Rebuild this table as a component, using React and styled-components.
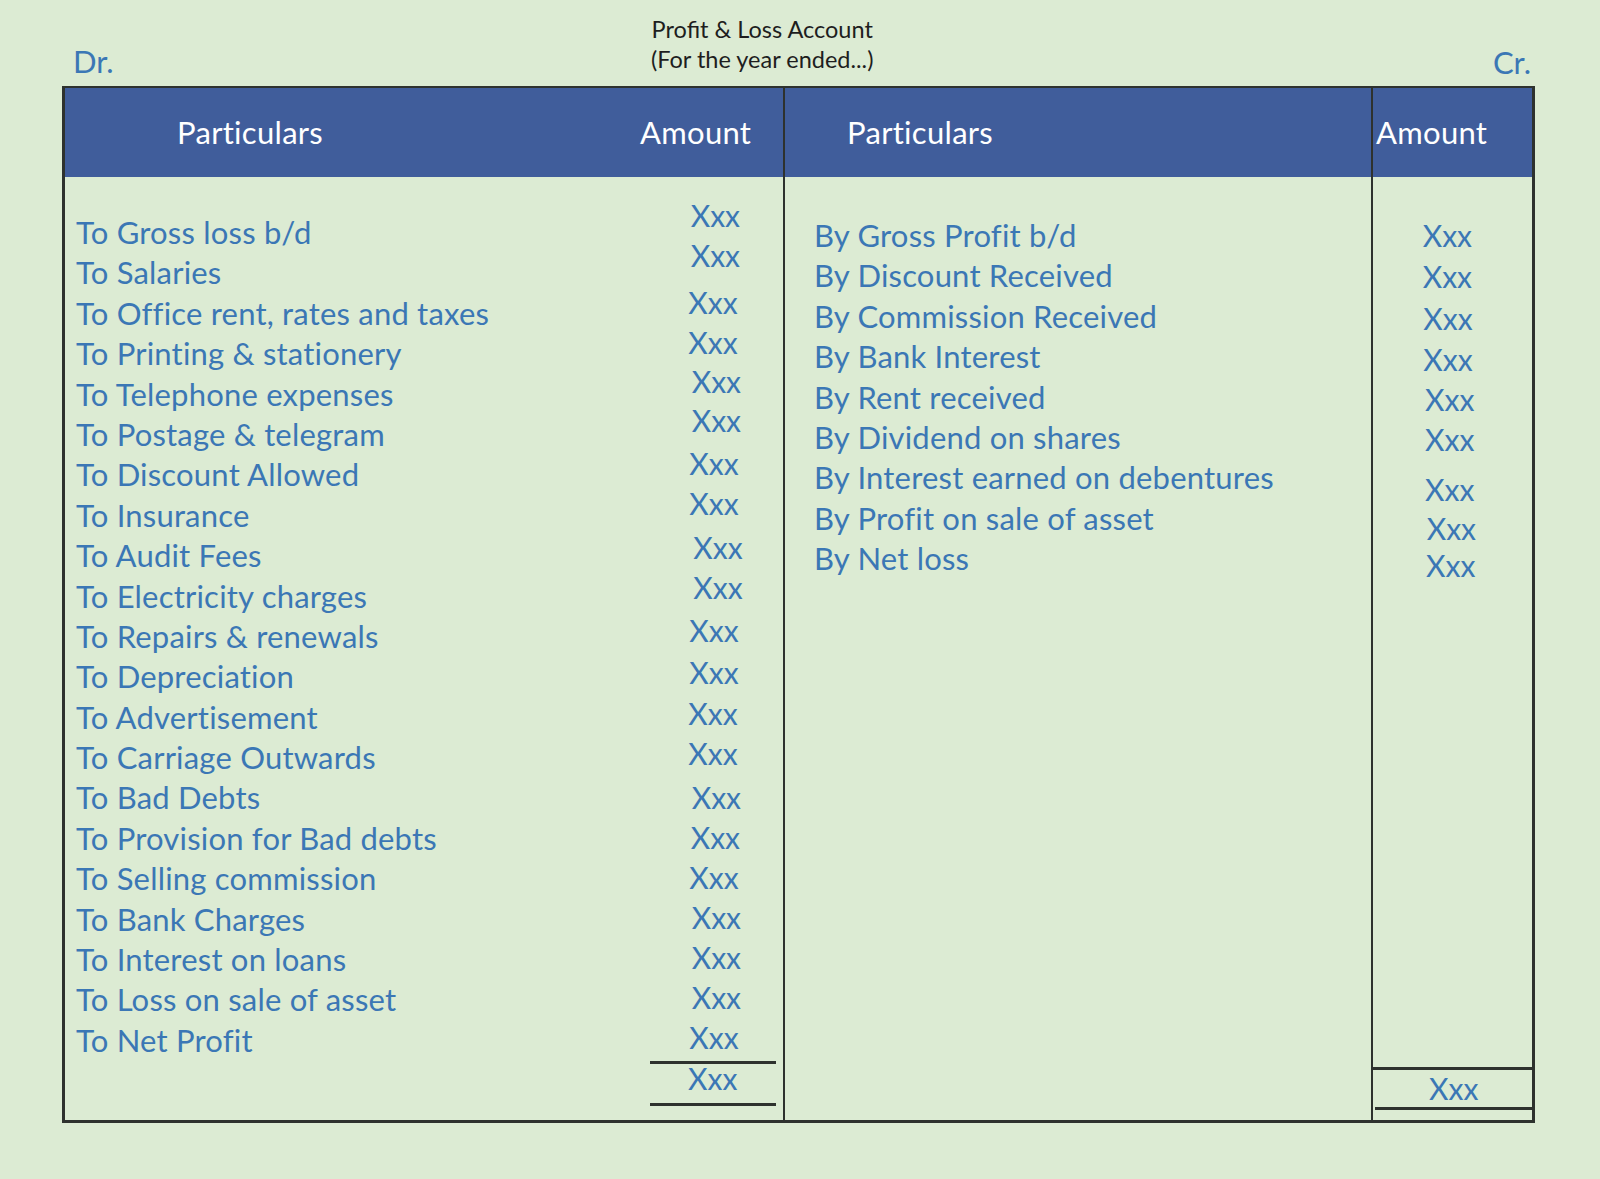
import React from "react";
import styled, { createGlobalStyle } from "styled-components";

const BLUE_TEXT = "#3b77b5";
const HEAD_BLUE = "#405d9b";
const LINE = "#2e322e";
const BG = "#dcebd3";

const GlobalStyle = createGlobalStyle`
  html, body { margin: 0; padding: 0; background: ${BG}; }
  body { font-family: Lato, "Open Sans", "Liberation Sans", sans-serif; }
  * { box-sizing: border-box; }
`;

const Page = styled.div`
  width: 1600px;
  height: 1179px;
  padding-left: 62px;
  background: ${BG};
  overflow: hidden;
`;

const TopBar = styled.header`
  width: 1473px;
  height: 86px;
  display: grid;
  grid-template-columns: 589px auto 1fr;
  align-items: start;
`;

const SideMark = styled.div`
  font-size: 31px;
  line-height: 40px;
  color: ${BLUE_TEXT};
  padding-top: ${(p) => p.$top}px;
  padding-left: ${(p) => p.$left || 0}px;
  padding-right: ${(p) => p.$right || 0}px;
  justify-self: ${(p) => p.$justify || "start"};
`;

const Title = styled.div`
  padding-top: 14px;
  text-align: center;
  color: #1e1e1e;
  font-size: 23.5px;
  line-height: 30px;
`;

const Table = styled.div`
  width: 1473px;
  height: 1037px;
  display: flex;
  border-top: 2px solid ${LINE};
  border-left: 3px solid ${LINE};
  border-right: 3px solid ${LINE};
  border-bottom: 3px solid ${LINE};
`;

const Side = styled.section`
  width: ${(p) => p.$width}px;
  flex: ${(p) => (p.$width ? "none" : "1")};
  display: flex;
  flex-direction: column;
  border-right: ${(p) => (p.$divider ? `2px solid ${LINE}` : "none")};
`;

const HeadBand = styled.div`
  height: 89px;
  flex: none;
  background: ${HEAD_BLUE};
  display: grid;
  grid-template-columns: ${(p) => p.$cols};
  align-items: center;
  color: #ffffff;
  font-size: 31px;
  letter-spacing: 0.3px;
`;

const HeadLabel = styled.div`
  padding-left: ${(p) => p.$pad}px;
  line-height: 40px;
  padding-bottom: 2px;
`;

const Body = styled.div`
  flex: 1;
  display: grid;
  grid-template-columns: ${(p) => p.$cols};
  min-height: 0;
`;

const LabelList = styled.ul`
  list-style: none;
  margin: 0;
  padding: ${(p) => p.$top}px 0 0 ${(p) => p.$left}px;
`;

const LabelRow = styled.li`
  font-size: 31px;
  letter-spacing: 0.2px;
  line-height: 40.4px;
  height: 40.4px;
  color: ${BLUE_TEXT};
  white-space: nowrap;
`;

const AmountColumn = styled.div`
  display: flex;
  flex-direction: column;
  flex: ${(p) => (p.$fill ? "1" : "none")};
`;

const AmountList = styled.ul`
  list-style: none;
  margin: 0;
  padding: 0;
  display: flex;
  flex-direction: column;
`;

const AmountItem = styled.li`
  font-size: 30px;
  line-height: 40px;
  height: 40px;
  color: ${BLUE_TEXT};
  margin-top: ${(p) => p.$offset}px;
  padding-left: ${(p) => p.$indent}px;
  white-space: nowrap;
`;

const DebitTotal = styled.div`
  margin: 4px 0 0 10px;
  width: 126px;
  border-top: 3px solid ${LINE};
  border-bottom: 3px solid ${LINE};
  font-size: 30px;
  line-height: 29px;
  padding: 0 0 10.5px 38px;
  color: ${BLUE_TEXT};
`;

const Spacer = styled.div`
  flex: 1;
`;

const CreditTotal = styled.div`
  border-top: 3px solid ${LINE};
  margin-bottom: 10px;
`;

const TotalValue = styled.div`
  font-size: 30px;
  line-height: 37px;
  height: 37px;
  padding-left: 56px;
  color: ${BLUE_TEXT};
`;

const BottomRule = styled.div`
  height: 3px;
  margin-left: 2px;
  background: ${LINE};
`;

const debitRows = [
  "To Gross loss b/d",
  "To Salaries",
  "To Office rent, rates and taxes",
  "To Printing & stationery",
  "To Telephone expenses",
  "To Postage & telegram",
  "To Discount Allowed",
  "To Insurance",
  "To Audit Fees",
  "To Electricity charges",
  "To Repairs & renewals",
  "To Depreciation",
  "To Advertisement",
  "To Carriage Outwards",
  "To Bad Debts",
  "To Provision for Bad debts",
  "To Selling commission",
  "To Bank Charges",
  "To Interest on loans",
  "To Loss on sale of asset",
  "To Net Profit",
];

// [cap centre y on the page, x start of the figure on the page]
const debitAmounts = [
  [215.8, 690.7], [255.8, 690.7], [302.5, 688.3], [342.5, 688.3],
  [381.8, 691.7], [420.8, 691.7], [464, 689.3], [504, 689.3],
  [547.5, 693.3], [587.5, 693.3], [630.8, 689.3], [672.5, 689.3],
  [714.2, 688.3], [754.2, 688.3], [797.5, 691.7], [837.5, 690.7],
  [877.5, 689.3], [917.5, 691.7], [957.5, 691.7], [997.5, 691.7],
  [1037.5, 689.3],
];

const creditRows = [
  "By Gross Profit b/d",
  "By Discount Received",
  "By Commission Received",
  "By Bank Interest",
  "By Rent received",
  "By Dividend on shares",
  "By Interest earned on debentures",
  "By Profit on sale of asset",
  "By Net loss",
];

const creditAmounts = [
  [235.8, 1422.7], [276.8, 1422.7], [319.2, 1423.3], [359.8, 1423.3],
  [400.2, 1425], [440.2, 1425], [490.2, 1425], [529.2, 1426.7],
  [565.8, 1426],
];

const BODY_TOP = 177;
const CAP_CENTRE = 20.8;

function Amounts({ items, columnLeft }) {
  let bottom = BODY_TOP;
  return (
    <AmountList>
      {items.map(([cy, x], i) => {
        const top = cy - CAP_CENTRE;
        const offset = top - bottom;
        bottom = top + 40;
        return (
          <AmountItem key={i} $offset={offset} $indent={x - columnLeft}>
            Xxx
          </AmountItem>
        );
      })}
    </AmountList>
  );
}

export default function App() {
  return (
    <Page>
      <GlobalStyle />
      <TopBar>
        <SideMark $top={41} $left={11}>Dr.</SideMark>
        <Title>
          <div>Profit &amp; Loss Account</div>
          <div>(For the year ended...)</div>
        </Title>
        <SideMark $top={42} $right={4} $justify="end">Cr.</SideMark>
      </TopBar>
      <Table>
        <Side $width={720} $divider>
          <HeadBand $cols="575px 1fr">
            <HeadLabel $pad={112}>Particulars</HeadLabel>
            <HeadLabel $pad={0}>Amount</HeadLabel>
          </HeadBand>
          <Body $cols="575px 1fr">
            <LabelList $top={35} $left={11}>
              {debitRows.map((r) => (
                <LabelRow key={r}>{r}</LabelRow>
              ))}
            </LabelList>
            <AmountColumn>
              <Amounts items={debitAmounts} columnLeft={640} />
              <DebitTotal>Xxx</DebitTotal>
            </AmountColumn>
          </Body>
        </Side>
        <Side $width={588} $divider>
          <HeadBand $cols="1fr">
            <HeadLabel $pad={62}>Particulars</HeadLabel>
          </HeadBand>
          <Body $cols="1fr">
            <LabelList $top={38} $left={29}>
              {creditRows.map((r) => (
                <LabelRow key={r}>{r}</LabelRow>
              ))}
            </LabelList>
          </Body>
        </Side>
        <Side>
          <HeadBand $cols="1fr">
            <HeadLabel $pad={3}>Amount</HeadLabel>
          </HeadBand>
          <AmountColumn $fill>
            <Amounts items={creditAmounts} columnLeft={1373} />
            <Spacer />
            <CreditTotal>
              <TotalValue>Xxx</TotalValue>
              <BottomRule />
            </CreditTotal>
          </AmountColumn>
        </Side>
      </Table>
    </Page>
  );
}
